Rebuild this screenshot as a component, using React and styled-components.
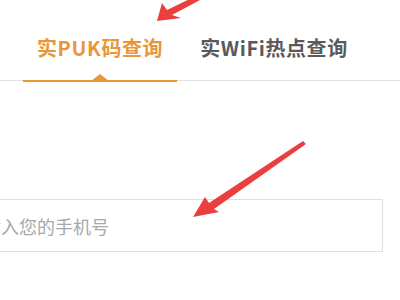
import React from "react";
import styled, { createGlobalStyle } from "styled-components";

const GlobalStyle = createGlobalStyle`
  html, body {
    margin: 0;
    padding: 0;
    background: #fff;
    font-family: "Noto Sans CJK SC", "Noto Sans", sans-serif;
  }
`;

const Page = styled.div`
  position: relative;
  width: 400px;
  height: 300px;
  overflow: hidden;
  background: #fff;
`;

const TabBar = styled.div`
  display: flex;
  align-items: flex-end;
  height: 81px;
  padding-left: 23px;
  border-bottom: 1px solid #e2e2e2;
  box-sizing: border-box;
`;

const Tab = styled.div`
  position: relative;
  padding: 0 14px 21px;
  margin-right: 9px;
  font-size: 20px;
  font-weight: 700;
  line-height: 22px;
  letter-spacing: 0.6px;
  color: ${({ active }) => (active ? "#e9963b" : "#5a5a5a")};
  white-space: nowrap;

  ${({ active }) =>
    active &&
    `
    &::after {
      content: "";
      position: absolute;
      left: 0;
      right: 0;
      bottom: -2px;
      height: 2px;
      background: #e9963b;
    }
    &::before {
      content: "";
      position: absolute;
      left: 50%;
      bottom: -1px;
      transform: translateX(-50%);
      border-left: 9px solid transparent;
      border-right: 9px solid transparent;
      border-bottom: 7px solid #e9963b;
    }
  `}
`;

const Form = styled.div`
  padding-top: 118px;
`;

const PhoneInput = styled.input`
  display: block;
  margin-left: -30px;
  width: 413px;
  height: 53px;
  box-sizing: border-box;
  border: 1px solid #e0e0e0;
  padding: 0 12px;
  font-family: "Noto Sans CJK SC", "Noto Sans", sans-serif;
  font-size: 18px;
  color: #333;
  outline: none;

  &::placeholder {
    color: #a8a8a8;
  }
`;

const Arrows = styled.svg`
  position: absolute;
  left: 0;
  top: 0;
  pointer-events: none;
`;

export default function App() {
  return (
    <>
      <GlobalStyle />
      <Page>
        <TabBar>
          <Tab active>实PUK码查询</Tab>
          <Tab>实WiFi热点查询</Tab>
        </TabBar>
        <Form>
          <PhoneInput placeholder="输入您的手机号" />
        </Form>
        <Arrows width="400" height="300" viewBox="0 0 400 300">
          <g fill="#ea2e2e" opacity="0.92">
            <polygon points="157,21 162,3 167,10 196,-4 200,0 172,15 181,18" />
            <polygon points="193,217 205,197 209,203 303,141 306,144 214,209 219,212" />
          </g>
        </Arrows>
      </Page>
    </>
  );
}
